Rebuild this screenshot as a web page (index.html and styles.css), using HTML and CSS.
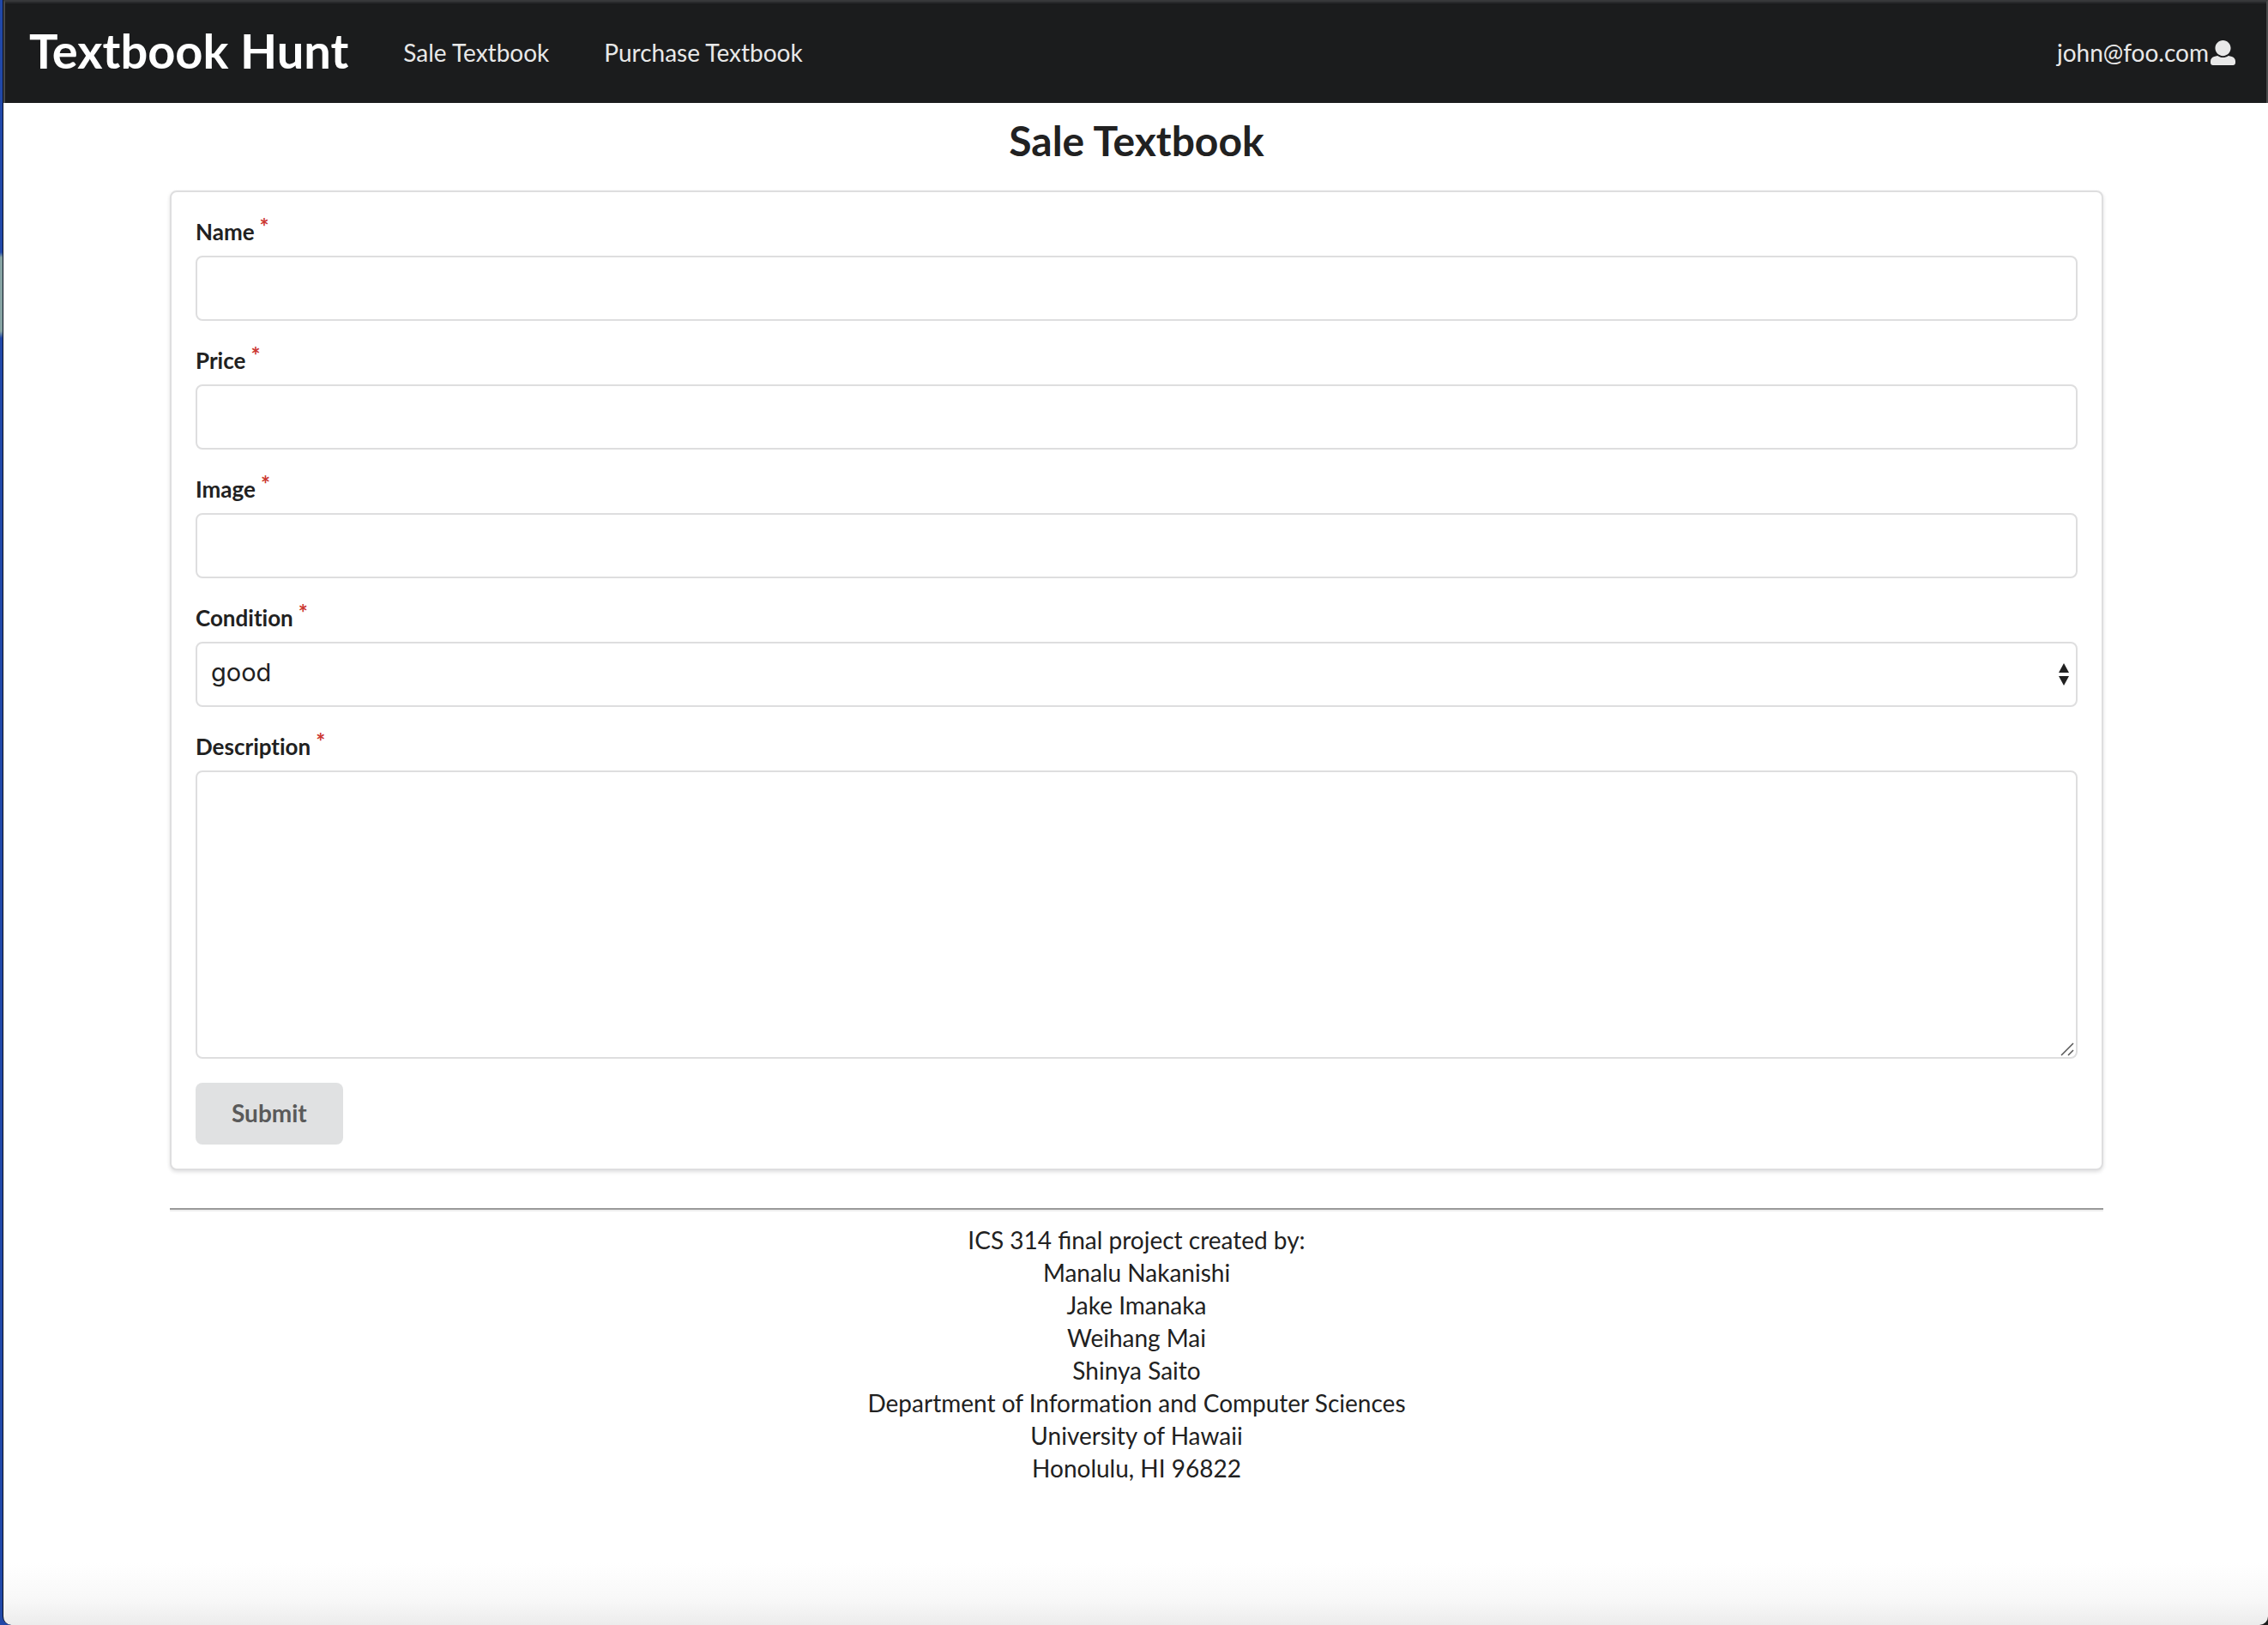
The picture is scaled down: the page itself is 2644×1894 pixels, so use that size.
FILE: index.html
```html
<!DOCTYPE html>
<html lang="en">
<head>
<meta charset="utf-8">
<title>Textbook Hunt</title>
<link rel="stylesheet" href="styles.css">
</head>
<body>
<div class="window">
  <header class="navbar">
    <h1 class="brand"><a href="#">Textbook Hunt</a></h1>
    <nav class="links">
      <a href="#">Sale Textbook</a>
      <a href="#">Purchase Textbook</a>
    </nav>
    <a class="user" href="#">john@foo.com<svg class="user-icon" viewBox="0 0 512 512" aria-hidden="true"><path d="M256 0c88.366 0 160 71.634 160 160s-71.634 160-160 160S96 248.366 96 160 167.634 0 256 0zm183.283 333.821l-71.313-17.828c-74.923 53.89-165.738 41.864-223.94 0l-71.313 17.828C29.981 344.505 0 382.903 0 426.955V464c0 26.51 21.49 48 48 48h416c26.51 0 48-21.49 48-48v-37.045c0-44.052-29.981-82.45-72.717-93.134z"/></svg></a>
  </header>
  <main class="container">
    <h2 class="title">Sale Textbook</h2>
    <form class="segment">
      <div class="field">
        <label for="name">Name</label>
        <input class="control" id="name" type="text">
      </div>
      <div class="field">
        <label for="price">Price</label>
        <input class="control" id="price" type="text">
      </div>
      <div class="field">
        <label for="image">Image</label>
        <input class="control" id="image" type="text">
      </div>
      <div class="field">
        <label for="condition">Condition</label>
        <div class="control-wrap">
          <select class="control" id="condition">
            <option>excellent</option>
            <option selected>good</option>
            <option>fair</option>
            <option>poor</option>
          </select>
          <svg class="arrows" viewBox="0 0 14 28" aria-hidden="true"><path d="M7 1l6 11H1zM7 27l6-11H1z"/></svg>
        </div>
      </div>
      <div class="field">
        <label for="description">Description</label>
        <div class="control-wrap">
          <textarea class="control area" id="description"></textarea>
          <svg class="grip" viewBox="0 0 16 16" aria-hidden="true"><path d="M1 15L15 1M9 15l6-6"/></svg>
        </div>
      </div>
      <button class="submit" type="submit">Submit</button>
    </form>
  </main>
  <footer class="container footer">
    <hr>
    <p>ICS 314 final project created by:</p>
    <p class="credits">Manalu Nakanishi<br>Jake Imanaka<br>Weihang Mai<br>Shinya Saito<br>Department of Information and Computer Sciences<br>University of Hawaii<br>Honolulu, HI 96822</p>
  </footer>
</div>
</body>
</html>
```
FILE: styles.css
```css
* {
  box-sizing: border-box;
}

body {
  margin: 0;
  padding-left: 3px;
  background:
    linear-gradient(#1c1e1c, #1c1e1c) right bottom / 20px 20px no-repeat,
    linear-gradient(#2148a8 294px, #86a3a3 300px, #86a3a3 386px, #2148a8 394px);
  color: #212121;
  font: 28px/38px Lato, sans-serif;
}

a {
  color: inherit;
  text-decoration: none;
}

.window {
  min-height: 100vh;
  border-left: 1px solid #0a0f1e;
  border-radius: 0 0 10px 10px;
  background: linear-gradient(to top, #ececec, #f8f8f8 30px, #fff 72px);
}

.navbar {
  display: flex;
  align-items: center;
  gap: 64px;
  height: 120px;
  padding: 0 36px 0 28px;
  border-top: 2px solid #37383a;
  border-left: 2px solid #48494a;
  border-right: 2px solid #48494a;
  background: linear-gradient(#28292b 2px, #1b1c1d 2px);
  color: #e8e8e8;
}

.brand {
  margin: 0;
  padding-bottom: 4px;
  color: #fff;
  font-size: 56px;
  line-height: 72px;
}

.links {
  display: flex;
  gap: 64px;
}

.user {
  display: flex;
  align-items: center;
  gap: 2px;
  margin-left: auto;
}

.user-icon {
  width: 29px;
  height: 29px;
  fill: currentColor;
}

.container {
  width: calc(100% - 386px);
  margin: 0 192px 0 194px;
}

.title {
  margin: 0;
  padding: 14px 0 28px;
  font-size: 48px;
  line-height: 60px;
  text-align: center;
}

.segment {
  padding: 28px;
  border: 2px solid #dededf;
  border-radius: 8px;
  background: #fff;
  box-shadow: 0 2px 4px rgba(34, 36, 38, .15);
}

.field {
  display: grid;
  gap: 10px;
  margin-bottom: 28px;
}

.field label {
  font-size: 26px;
  font-weight: 700;
  font-variant-ligatures: none;
  line-height: 36px;
}

.field label::after {
  content: "*";
  margin-left: 6px;
  color: #cc3832;
  line-height: 1px;
  vertical-align: 6px;
}

.control-wrap {
  display: grid;
  position: relative;
}

.control {
  width: 100%;
  height: 76px;
  margin: 0;
  padding: 0 16px 4px;
  border: 2px solid #dededf;
  border-radius: 8px;
  outline: 0;
  appearance: none;
  background: #fff;
  color: #212121;
  font: 29px/36px Inter, sans-serif;
}

.area {
  height: 336px;
  padding: 20px 16px;
  resize: vertical;
}

.area::-webkit-resizer {
  background: transparent;
}

.arrows,
.grip {
  position: absolute;
  pointer-events: none;
}

.arrows {
  top: 24px;
  right: 9px;
  width: 14px;
  height: 28px;
  fill: #212121;
}

.grip {
  right: 4px;
  bottom: 3px;
  width: 16px;
  height: 16px;
  fill: none;
  stroke: #555;
  stroke-width: 1.5;
}

.submit {
  display: block;
  height: 72px;
  padding: 0 42px 2px;
  border: 0;
  border-radius: 8px;
  background: #e0e1e2;
  color: #5a5a5a;
  font: 700 28px/36px Lato, sans-serif;
}

.footer {
  padding-top: 44px;
  text-align: center;
}

.footer hr {
  margin: 0 0 14px;
  border: 0;
  border-top: 2px solid #9a9a9a;
  border-bottom: 2px solid #eee;
}

.footer p {
  margin: 0;
}

.footer .credits {
  padding-bottom: 16px;
  font-variant-ligatures: none;
}
```
